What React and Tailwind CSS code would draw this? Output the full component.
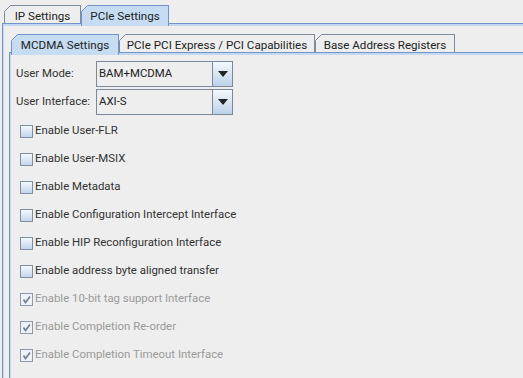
import React from "react";

const FONT = { fontFamily: "Roboto, 'Liberation Sans', sans-serif" };

// small chamfer on the tab's top-left corner (Metal look)
function Corner({ color }) {
  return (
    <svg className="absolute -left-px -top-px" width="7" height="7">
      <path d="M0 0H7L0 7Z" fill="#eeeeee" />
      <path d="M0.5 6.5L6.5 0.5" stroke={color} strokeWidth="1" />
    </svg>
  );
}

function Tab({ label, selected, width }) {
  if (selected) {
    return (
      <div
        className="relative z-10 -mb-[3px] flex h-[21px] items-start justify-center border-x border-t border-[#7394c8] bg-[#c6dcf2] pt-[2px] text-[11.6px] text-[#222]"
        style={{ width }}
      >
        <Corner color="#7394c8" />
        {label}
      </div>
    );
  }
  return (
    <div
      className="relative flex h-[18px] items-start justify-center border-x border-t border-[#7f8c9b] bg-[#eeeeee] pt-[2px] text-[11.6px] text-[#222]"
      style={{ width }}
    >
      <Corner color="#7f8c9b" />
      {label}
    </div>
  );
}

function Combo({ value }) {
  return (
    <div className="flex h-[26px] w-[137px] border border-[#7a8899] bg-[#eeeeee]">
      <div className="flex flex-1 items-center pl-[2px] text-[11.4px] text-[#222]">{value}</div>
      <div className="flex w-[20px] items-center justify-center border-l border-[#7a8899] bg-gradient-to-b from-[#f4f8fc] to-[#bcd2e8]">
        <svg width="10" height="6">
          <path d="M0 0H10L5 6Z" fill="#222" />
        </svg>
      </div>
    </div>
  );
}

function Check({ label, checked, disabled }) {
  return (
    <div className="flex h-[28px] items-center pl-[4px]">
      {disabled ? (
        <div className="flex h-[13px] w-[13px] items-center justify-center border border-[#8d9aab] bg-[#eef1f5]">
          {checked && (
            <svg width="9" height="9">
              <path d="M1.5 4.5L3.5 7.5L8 1.5" stroke="#6e7f96" strokeWidth="1.6" fill="none" />
            </svg>
          )}
        </div>
      ) : (
        <div className="h-[13px] w-[13px] border border-[#7f8fa2] bg-gradient-to-b from-[#f6f9fc] to-[#c3d5e9]" />
      )}
      <span className={disabled ? "ml-[2px] text-[11.4px] text-[#9a9a9a]" : "ml-[2px] text-[11.4px] text-[#333]"}>
        {label}
      </span>
    </div>
  );
}

export default function App() {
  const checks = [
    ["Enable User-FLR"],
    ["Enable User-MSIX"],
    ["Enable Metadata"],
    ["Enable Configuration Intercept Interface"],
    ["Enable HIP Reconfiguration Interface"],
    ["Enable address byte aligned transfer"],
    ["Enable 10-bit tag support Interface", true],
    ["Enable Completion Re-order", true],
    ["Enable Completion Timeout Interface", true],
  ];

  return (
    <div className="h-[378px] w-[523px] overflow-hidden bg-[#eeeeee]" style={FONT}>
      {/* outer tabs */}
      <div className="flex items-end pl-[4px] pt-[5px]">
        <Tab label="IP Settings" width={77} />
        <Tab label="PCIe Settings" width={88} selected />
      </div>

      <div className="ml-[2px] h-full border-l border-t border-[#7394c8]">
        <div className="h-full border-l border-t-2 border-[#c4d8ef]">
          <div className="ml-[5px] pt-[8px]">
            {/* inner tabs */}
            <div className="flex items-end pl-[2px]">
              <Tab label="MCDMA Settings" width={108} selected />
              <Tab label="PCIe PCI Express / PCI Capabilities" width={196} />
              <Tab label="Base Address Registers" width={140} />
            </div>

            <div className="h-[400px] border-l border-t border-[#7394c8]">
              <div className="h-full border-l border-t-2 border-[#c4d8ef] pl-[5px] pt-[6px]">
                <div className="flex items-center">
                  <div className="w-[80px] text-[11.4px] text-[#333]">User Mode:</div>
                  <Combo value="BAM+MCDMA" />
                </div>
                <div className="mt-[2px] flex items-center">
                  <div className="w-[80px] text-[11.4px] text-[#333]">User Interface:</div>
                  <Combo value="AXI-S" />
                </div>

                <div className="mt-[2px]">
                  {checks.map(([label, dis]) => (
                    <Check key={label} label={label} checked={dis} disabled={dis} />
                  ))}
                </div>
              </div>
            </div>
          </div>
        </div>
      </div>
    </div>
  );
}
